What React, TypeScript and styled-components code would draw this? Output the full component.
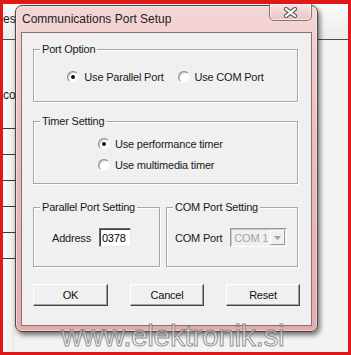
import React from 'react';
import styled, { createGlobalStyle } from 'styled-components';

const GlobalStyle = createGlobalStyle`
  html, body {
    margin: 0;
    padding: 0;
    background: #ffffff;
  }
  * {
    box-sizing: border-box;
  }
`;

const Screen = styled.div`
  position: relative;
  width: 351px;
  height: 355px;
  border: 3px solid #e01818;
  border-top-width: 4px;
  background: #f3f3f3;
  overflow: hidden;
  font-family: 'Liberation Sans', Arial, sans-serif;
  color: #1a1a1a;
`;

/* the application behind the dialog */
const BackApp = styled.div`
  display: flex;
  flex-direction: column;
  height: 100%;
`;

const BackHeader = styled.div`
  height: 36px;
  padding: 8px 0 0 0;
  font-size: 12px;
  line-height: 14px;
  background: linear-gradient(#fbfbfb, #ececec);
  border-bottom: 1px solid #4a4a4a;
`;

const BackBody = styled.div`
  display: flex;
  flex: 1;
`;

const BackTable = styled.div`
  width: 12px;
  display: flex;
  flex-direction: column;
  background: linear-gradient(90deg, #fdfdfd, #e9e9e9);
`;

const BackIntro = styled.div`
  height: 88px;
  padding-top: 48px;
  font-size: 12px;
  line-height: 14px;
  overflow: hidden;
  white-space: nowrap;
`;

const BackRow = styled.div`
  height: 26px;
  border-top: 1px solid #3c3c3c;
`;

/* the dialog window */
const Window = styled.div`
  position: absolute;
  left: 12px;
  top: 1px;
  width: 303px;
  height: 327px;
  display: flex;
  flex-direction: column;
  padding: 0 5px 5px 5px;
  border: 1px solid #4f4343;
  border-radius: 7px;
  background: linear-gradient(#f4d6d6, #ebbdbd 40%, #e3acac);
  box-shadow: 2px 3px 5px rgba(0, 0, 0, 0.55), inset 0 0 0 1px rgba(255, 255, 255, 0.45);
`;

const TitleBar = styled.div`
  height: 26px;
  display: flex;
  justify-content: space-between;
  align-items: flex-start;
`;

const Title = styled.div`
  margin: 6px 0 0 1px;
  font-size: 12px;
  line-height: 14px;
  color: #1e1e1e;
`;

const CloseButton = styled.div`
  width: 43px;
  height: 17px;
  margin-top: -2px;
  display: flex;
  align-items: center;
  justify-content: center;
  border: 1px solid #8a7474;
  border-top: none;
  border-radius: 0 0 5px 5px;
  background: linear-gradient(#f8e2e2, #e9c4c4);
  box-shadow: inset 0 0 0 1px rgba(255, 255, 255, 0.55);
`;

const Client = styled.div`
  flex: 1;
  display: flex;
  flex-direction: column;
  padding: 16px 13px 0 11px;
  background: #f0f0f0;
  border: 1px solid #8c7070;
  font-size: 11px;
  line-height: 14px;
  letter-spacing: -0.2px;
`;

const Group = styled.section<{ $width?: number; $gap?: number }>`
  position: relative;
  flex-shrink: 0;
  margin-top: ${({ $gap }) => $gap ?? 0}px;
  border: 1px solid #a6a6a6;
  box-shadow: 1px 1px 0 #ffffff, inset 1px 1px 0 #ffffff;
  ${({ $width }) => ($width ? `width: ${$width}px;` : '')}
`;

/* caption that sits over the top border of a group box */
const Legend = styled.span`
  position: absolute;
  left: 6px;
  top: -8px;
  padding: 0 2px;
  background: #f0f0f0;
  font-size: 11px;
  line-height: 14px;
  white-space: nowrap;
`;

const OptionRow = styled.div`
  display: flex;
  justify-content: center;
  gap: 14px;
  padding: 20px 0 17px 0;
`;

const OptionColumn = styled.div`
  display: flex;
  flex-direction: column;
  gap: 7px;
  padding: 15px 0 11px 64px;
`;

const RadioLabel = styled.label`
  display: inline-flex;
  align-items: center;
  gap: 5px;
  height: 14px;
  white-space: nowrap;
`;

const RadioCircle = styled.span<{ $checked?: boolean }>`
  position: relative;
  width: 12px;
  height: 12px;
  border-radius: 50%;
  background: #ffffff;
  border: 1px solid;
  border-color: #8a8a8a #f4f4f4 #f4f4f4 #8a8a8a;
  box-shadow: inset 1px 1px 0 #c4c4c4;

  &::after {
    content: '';
    display: ${({ $checked }) => ($checked ? 'block' : 'none')};
    position: absolute;
    left: 3px;
    top: 3px;
    width: 4px;
    height: 4px;
    border-radius: 50%;
    background: #111111;
  }
`;

const SettingsRow = styled.div`
  display: flex;
  gap: 6px;
  margin-top: 23px;

  & > section:last-child {
    flex: 1;
  }
`;

const FieldLine = styled.div<{ $left: number }>`
  display: flex;
  align-items: center;
  gap: 8px;
  height: 19px;
  margin: 20px 0 19px ${({ $left }) => $left}px;
  white-space: nowrap;
`;

const TextBox = styled.div`
  width: 32px;
  height: 19px;
  padding: 2px 0 0 2px;
  background: #ffffff;
  border: 1px solid;
  border-color: #6c6c6c #e6e6e6 #e6e6e6 #6c6c6c;
  box-shadow: inset 1px 1px 0 #3c3c3c;
  font-size: 11px;
  line-height: 14px;
  color: #000;
`;

const Combo = styled.div`
  width: 57px;
  height: 19px;
  display: flex;
  align-items: stretch;
  background: #f0f0f0;
  border: 1px solid;
  border-color: #9a9a9a #ffffff #ffffff #9a9a9a;
  box-shadow: inset 1px 1px 0 #c8c8c8;
`;

const ComboText = styled.div`
  flex: 1;
  padding: 2px 0 0 3px;
  color: #a3a3a3;
  font-size: 11px;
  line-height: 14px;
`;

const ComboArrow = styled.div`
  width: 15px;
  margin: 1px 1px 1px 0;
  display: flex;
  align-items: center;
  justify-content: center;
  background: #f0f0f0;
  border: 1px solid;
  border-color: #ffffff #9a9a9a #9a9a9a #ffffff;
`;

const ButtonRow = styled.div`
  display: flex;
  justify-content: space-between;
  margin: 17px -2px 0 0;
`;

const Button = styled.div<{ $w: number }>`
  width: ${({ $w }) => $w}px;
  height: 22px;
  display: flex;
  align-items: center;
  justify-content: center;
  background: #f0f0f0;
  border: 1px solid;
  border-color: #ffffff #444444 #444444 #ffffff;
  box-shadow: inset -1px -1px 0 #a0a0a0;
  font-size: 11px;
  color: #111;
`;

const Watermark = styled.div`
  position: absolute;
  left: 58px;
  top: 315px;
  font-family: 'Liberation Sans', Arial, sans-serif;
  font-size: 30px;
  line-height: 34px;
  letter-spacing: -0.4px;
  color: rgba(255, 255, 255, 0.45);
  -webkit-text-stroke: 1px rgba(110, 110, 110, 0.75);
  white-space: nowrap;
`;

const Radio: React.FC<{ label: string; checked?: boolean }> = ({ label, checked }) => (
  <RadioLabel>
    <RadioCircle $checked={checked} />
    {label}
  </RadioLabel>
);

export default function App() {
  return (
    <>
      <GlobalStyle />
      <Screen>
        <BackApp>
          <BackHeader>ess</BackHeader>
          <BackBody>
            <BackTable>
              <BackIntro>coo</BackIntro>
              {[0, 1, 2, 3, 4, 5].map((i) => (
                <BackRow key={i} />
              ))}
            </BackTable>
          </BackBody>
        </BackApp>

        <Window>
          <TitleBar>
            <Title>Communications Port Setup</Title>
            <CloseButton>
              <svg width="15" height="11" viewBox="0 0 15 11">
                <path d="M3 2 L12 9 M12 2 L3 9" stroke="#5a5a5a" strokeWidth="4.2" strokeLinecap="round" />
                <path d="M3 2 L12 9 M12 2 L3 9" stroke="#ffffff" strokeWidth="2.2" strokeLinecap="round" />
              </svg>
            </CloseButton>
          </TitleBar>
          <Client>
            <Group>
              <Legend>Port Option</Legend>
              <OptionRow>
                <Radio label="Use Parallel Port" checked />
                <Radio label="Use COM Port" />
              </OptionRow>
            </Group>
            <Group $gap={19}>
              <Legend>Timer Setting</Legend>
              <OptionColumn>
                <Radio label="Use performance timer" checked />
                <Radio label="Use multimedia timer" />
              </OptionColumn>
            </Group>
            <SettingsRow>
              <Group $width={127}>
                <Legend>Parallel Port Setting</Legend>
                <FieldLine $left={18}>
                  Address
                  <TextBox>0378</TextBox>
                </FieldLine>
              </Group>
              <Group>
                <Legend>COM Port Setting</Legend>
                <FieldLine $left={8}>
                  COM Port
                  <Combo>
                    <ComboText>COM 1</ComboText>
                    <ComboArrow>
                      <svg width="7" height="4" viewBox="0 0 7 4">
                        <path d="M0 0 H7 L3.5 4 Z" fill="#a0a0a0" />
                      </svg>
                    </ComboArrow>
                  </Combo>
                </FieldLine>
              </Group>
            </SettingsRow>
            <ButtonRow>
              <Button $w={75}>OK</Button>
              <Button $w={74}>Cancel</Button>
              <Button $w={74}>Reset</Button>
            </ButtonRow>
          </Client>
        </Window>

        <Watermark>www.elektronik.si</Watermark>
      </Screen>
    </>
  );
}
